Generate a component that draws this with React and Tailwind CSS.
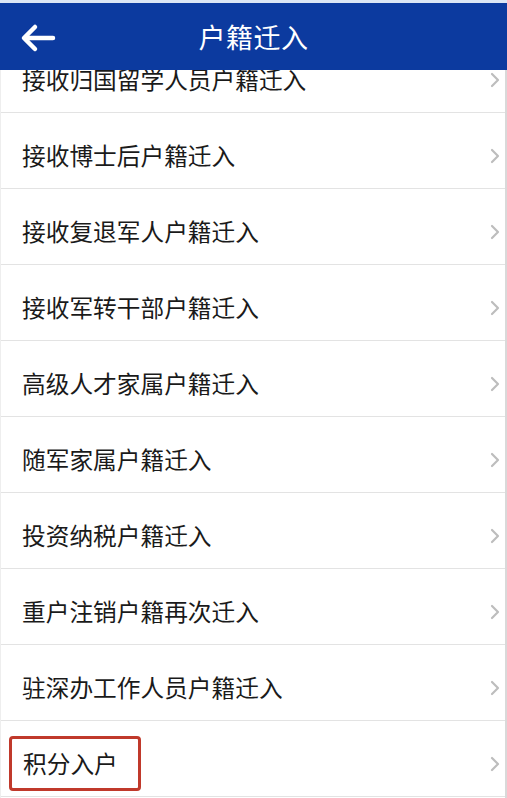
import React from "react";

const items = [
  "接收归国留学人员户籍迁入",
  "接收博士后户籍迁入",
  "接收复退军人户籍迁入",
  "接收军转干部户籍迁入",
  "高级人才家属户籍迁入",
  "随军家属户籍迁入",
  "投资纳税户籍迁入",
  "重户注销户籍再次迁入",
  "驻深办工作人员户籍迁入",
  "积分入户",
];

function Chevron() {
  return (
    <svg width="10" height="16" viewBox="0 0 10 16" className="shrink-0">
      <path d="M2 2 L8 8 L2 14" fill="none" stroke="#bdbdbd" strokeWidth="2.2" strokeLinecap="round" strokeLinejoin="round" />
    </svg>
  );
}

export default function App() {
  const font = { fontFamily: '"Noto Sans CJK SC", "Noto Sans", sans-serif' };
  return (
    <div className="w-[507px] h-[798px] overflow-hidden bg-white flex flex-col" style={font}>
      <div className="h-[3px] bg-[#dce6f5] shrink-0" />
      <div className="h-[67px] shrink-0 bg-[#0c3a9f] relative flex items-center justify-center z-10">
        <svg width="36" height="30" viewBox="0 0 36 30" className="absolute left-[20px] top-[20px]">
          <path d="M33 15 H6 M15 4 L4 15 L15 26" fill="none" stroke="white" strokeWidth="4.5" strokeLinecap="round" strokeLinejoin="round" />
        </svg>
        <span className="text-white text-[27px] leading-none tracking-[0.5px]">户籍迁入</span>
      </div>
      <div className="flex-1 overflow-hidden border-r-2 border-[#d9d9d9] border-l border-l-[#eeeeee]">
        <div className="-mt-[33px]">
          {items.map((t, i) => (
            <div
              key={i}
              className="h-[76px] flex items-center justify-between pl-[21px] pr-[5px] pt-[10px] border-b border-[#e3e3e3]"
            >
              {i === items.length - 1 ? (
                <span className="-ml-[13px] pl-[11px] pr-[20px] h-[55px] flex items-center border-[3px] border-[#c0392b] rounded-[4px] text-[23.7px] text-[#1a1a1a] leading-none">
                  {t}
                </span>
              ) : (
                <span className="text-[23.7px] text-[#1a1a1a] leading-none">{t}</span>
              )}
              <Chevron />
            </div>
          ))}
        </div>
      </div>
    </div>
  );
}
